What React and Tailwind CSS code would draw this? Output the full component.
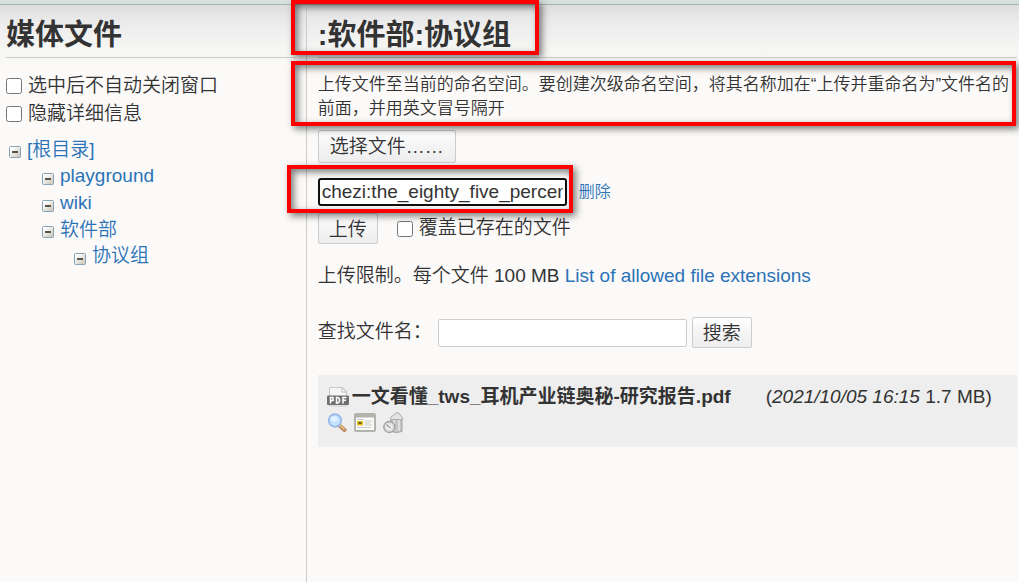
import React, { useState } from "react";

const linkClass = "text-[#2b73b7] hover:underline";
const buttonClass =
  "rounded-[2px] border border-[#cccccc] bg-linear-to-b from-white via-[#f4f4f4] to-[#eeeeee] text-[19px] text-[#333333]";

function Callout({ className }) {
  return (
    <div
      aria-hidden="true"
      className={
        "pointer-events-none absolute z-10 border-4 border-[#ff0000] shadow-[3px_3px_7px_rgba(0,0,0,0.5),inset_3px_3px_7px_rgba(0,0,0,0.5)] " +
        className
      }
    />
  );
}

function Collapse() {
  return (
    <svg viewBox="0 0 12 12" className="h-3 w-3 shrink-0" aria-hidden="true">
      <defs>
        <linearGradient id="toggle" x1="0" y1="0" x2="1" y2="1">
          <stop offset="0.2" stopColor="#ffffff" />
          <stop offset="1" stopColor="#c6c0b0" />
        </linearGradient>
      </defs>
      <rect x="0.5" y="0.5" width="11" height="11" rx="1" fill="url(#toggle)" stroke="#86a3b8" />
      <rect x="3" y="5" width="6" height="2" fill="#55554f" />
    </svg>
  );
}

function PdfIcon() {
  return (
    <svg viewBox="0 0 22 22" className="h-[22px] w-[22px]" aria-hidden="true">
      <path d="M2.500 1.500h13l4 4v14.500h-17z" fill="#f6f6f6" stroke="#c8c8c8" />
      <path d="M15 1.500v4.500h4.500z" fill="#ffffff" stroke="#bdbdbd" />
      <rect x="0" y="9.500" width="22" height="9.500" rx="1" fill="#707070" />
      <path
        d="M3.500 17.500v-6h2.500v3h-2.500M9.500 11.500v5.500h1.500l1.500-1.500v-2.500l-1.500-1.500zM16 17.500v-6h3.500M16 14.300h3"
        fill="none"
        stroke="#ffffff"
        strokeWidth="1.500"
      />
    </svg>
  );
}

function MagnifierIcon() {
  return (
    <svg viewBox="0 0 20 20" className="h-5 w-5" aria-hidden="true">
      <path d="M12.500 12.500l5 4.500" stroke="#b98760" strokeWidth="4" strokeLinecap="round" />
      <path d="M12.500 12l4.500 4" stroke="#e6b57f" strokeWidth="1.800" strokeLinecap="round" />
      <circle cx="8" cy="7.500" r="6.300" fill="#c3e0fc" stroke="#94b9ea" strokeWidth="1.700" />
      <ellipse cx="7" cy="6" rx="3.500" ry="2.800" fill="#e2f1ff" />
    </svg>
  );
}

function DetailsIcon() {
  return (
    <svg viewBox="0 0 22 20" className="h-5 w-[22px]" aria-hidden="true">
      <rect x="1" y="1" width="20" height="17" rx="1" fill="#fafafa" stroke="#b3b3ae" strokeWidth="2" />
      <rect x="1" y="1" width="20" height="3.500" fill="#b3b3ae" />
      <rect x="3" y="8" width="6" height="4.500" fill="#e8c01c" />
      <rect x="4.500" y="9" width="3" height="2" fill="#6b5a19" />
      <path d="M10.500 8h8M10.500 10h6M10.500 12h8M3 14.500h14M3 6.500h7" stroke="#cccccc" />
    </svg>
  );
}

function TrashIcon() {
  return (
    <svg viewBox="0 0 20 22" className="h-[22px] w-5" aria-hidden="true">
      <path d="M8 7v12.500q5.500 2 11 0V7z" fill="#c4c4c4" stroke="#a3a3a3" />
      <path d="M11 8v11M16 8v11" stroke="#e6e6e6" strokeWidth="1.600" />
      <path d="M7.500 7.500V5.500L13 1h3l3.500 5v1.500z" fill="#e4e4e4" stroke="#adadad" />
      <circle cx="6.300" cy="15" r="5.500" fill="#dedede" stroke="#9d9d9d" strokeWidth="1.300" />
      <circle cx="6.300" cy="15" r="2.800" fill="#efefef" />
      <path d="M3.500 12.500l4 3.500" stroke="#a0a0a0" strokeWidth="1.300" />
    </svg>
  );
}

function Check({ label }) {
  return (
    <label className="flex h-7 items-center gap-[6px]">
      <input type="checkbox" className="h-4 w-4 shrink-0" />
      {label}
    </label>
  );
}

function TreeItem({ label, className = "h-[27px]", children }) {
  return (
    <li>
      <div className={"flex items-center gap-[6px] " + className}>
        <button type="button" aria-label={"折叠 " + label} className="mt-1">
          <Collapse />
        </button>
        <a href="#" className={linkClass}>{label}</a>
      </div>
      {children}
    </li>
  );
}

export default function App() {
  const [name, setName] = useState("chezi:the_eighty_five_percent_rule.pdf");
  return (
    <div className="flex min-h-screen flex-col bg-[#fbfaf9] font-['Liberation_Sans','Noto_Sans_CJK_SC',sans-serif] text-[19px] font-[350] text-[#333333]">
      <div className="h-[5px] border-b border-[#a4b4b2] bg-[#d5e1df]" />
      <div className="flex grow bg-[linear-gradient(to_bottom,#dddddd_0px,#ececec_18px,#f5f5f4_42px,#fbfaf9_66px)] pt-[2px]">
        <aside className="w-[30.1%] shrink-0 border-r border-[#cccccc] pr-[10px] pl-[6px]">
          <h1 className="h-[51px] border-b border-[#cccccc] text-[29px] leading-[56px] font-bold">媒体文件</h1>
          <div className="pt-[14px]">
            <Check label="选中后不自动关闭窗口" />
            <Check label="隐藏详细信息" />
          </div>
          <ul className="pt-[9px] pl-[3px]">
            <TreeItem label="[根目录]" className="h-[26px]">
              <ul className="pl-[33px]">
                <TreeItem label="playground" />
                <TreeItem label="wiki" />
                <TreeItem label="软件部" className="h-[26px]">
                  <ul className="pl-8">
                    <TreeItem label="协议组" />
                  </ul>
                </TreeItem>
              </ul>
            </TreeItem>
          </ul>
        </aside>
        <main className="min-w-0 grow pr-[2px] pl-[11px]">
          <div className="relative">
            <h2 className="h-[51px] border-b border-[#cccccc] text-[29px] leading-[56px] font-bold">:软件部:协议组</h2>
            <Callout className="-top-[7px] -left-[27px] h-[55px] w-[248px]" />
          </div>
          <div className="relative mt-[15px]">
            <p className="text-[17px] leading-6">
              上传文件至当前的命名空间。要创建次级命名空间，将其名称加在“上传并重命名为”文件名的前面，并用英文冒号隔开
            </p>
            <Callout className="-top-3 right-[1px] -bottom-[5px] -left-[27px]" />
          </div>
          <button type="button" className={buttonClass + " mt-[9px] block h-[33px] px-[11px] pt-[2px]"}>选择文件……</button>
          <div className="mt-[15px] flex items-center gap-[12px]">
            <div className="relative">
              <input
                aria-label="上传并重命名为"
                value={name}
                onChange={(e) => setName(e.target.value)}
                className="block h-7 w-[249px] rounded-[3px] border-2 border-[#101010] bg-white px-[2px] outline-none"
              />
              <Callout className="-top-[13px] -left-[31px] h-12 w-[286px]" />
            </div>
            <a href="#" className={linkClass + " text-[16px]"}>删除</a>
          </div>
          <div className="mt-[7px] flex items-center">
            <button type="button" className={buttonClass + " h-[31px] border-[#999999] px-[10px] pt-[2px]"}>上传</button>
            <div className="ml-[19px]">
              <Check label="覆盖已存在的文件" />
            </div>
          </div>
          <p className="mt-[18px] leading-7">
            上传限制。每个文件 100 MB <a href="#" className={linkClass}>List of allowed file extensions</a>
          </p>
          <form className="mt-[27px] flex items-center" onSubmit={(e) => e.preventDefault()}>
            <label htmlFor="q" className="w-[120px] shrink-0 whitespace-nowrap">查找文件名：</label>
            <input id="q" className="h-7 w-[249px] rounded-[2px] border border-[#cccccc] bg-white px-1" />
            <button type="submit" className={buttonClass + " ml-[5px] h-[31px] px-[10px] pt-[2px]"}>搜索</button>
          </form>
          <section className="mt-[27px] h-[72px] bg-[#eeeeee] px-[9px] pt-[9px]">
            <div className="flex h-[26px] items-center whitespace-nowrap">
              <PdfIcon />
              <a href="#" className="ml-[3px] font-bold">一文看懂_tws_耳机产业链奥秘-研究报告.pdf</a>
              <span className="ml-[35px]">(<i>2021/10/05 16:15</i> 1.7 MB)</span>
            </div>
            <div className="flex h-[26px] items-center gap-[7px]">
              <button type="button" aria-label="查看"><MagnifierIcon /></button>
              <button type="button" aria-label="编辑"><DetailsIcon /></button>
              <button type="button" aria-label="删除文件"><TrashIcon /></button>
            </div>
          </section>
        </main>
      </div>
    </div>
  );
}
